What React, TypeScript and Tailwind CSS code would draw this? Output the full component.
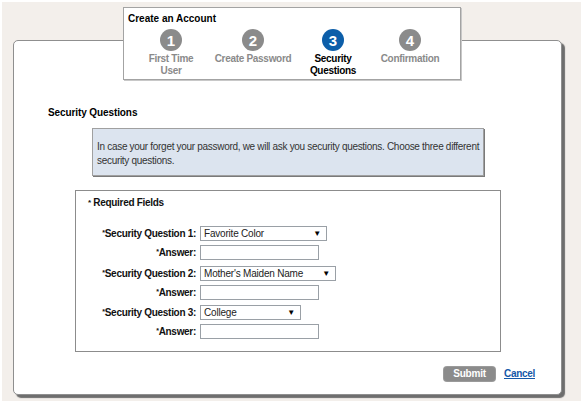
import React from "react";

function Step({ n, label, active, w }: { n: number; label: React.ReactNode; active?: boolean; w: string }) {
  return (
    <div className={`flex flex-col items-center ${w}`}>
      <div
        className={`w-[22px] h-[22px] rounded-full flex items-center justify-center text-white font-bold text-[15px] leading-none ${
          active ? "bg-[#0c5ea9]" : "bg-[#8b8b8b]"
        }`}
      >
        {n}
      </div>
      <div
        className={`mt-[2px] text-center text-[10px] tracking-[-0.3px] leading-[12px] font-bold ${
          active ? "text-black" : "text-[#8a8a8a]"
        }`}
      >
        {label}
      </div>
    </div>
  );
}

function Select({ value, w }: { value: string; w: string }) {
  return (
    <div
      className={`h-[15px] ${w} border border-[#9aa0a6] bg-white flex items-center justify-between pl-[3px] pr-[5px] text-[10px] tracking-[-0.2px] leading-none text-[#222]`}
    >
      <span>{value}</span>
      <span className="text-[8px] text-black">▼</span>
    </div>
  );
}

function Input() {
  return <div className="h-[15px] w-[119px] border border-[#9aa0a6] bg-white" />;
}

function Label({ text }: { text: string }) {
  return (
    <div className="w-[124px] text-right pr-[4px] text-[10px] tracking-[-0.3px] leading-[13px] font-bold text-[#111]">
      <span className="text-[7px] align-top relative top-[-1px]">*</span>
      {text}
    </div>
  );
}

export default function App() {
  return (
    <div className="w-[581px] h-[401px] bg-white pt-[2px] pl-[2px] font-['Liberation_Sans',Arial,sans-serif] overflow-hidden">
      <div className="w-[579px] h-[399px] bg-[#f3efeb] pt-[5px]">
        {/* Stepper */}
        <div className="relative z-10 ml-[121px] w-[338px] h-[73px] bg-white border border-[#a3a3a3] shadow-[1px_1px_0_#c8c8c8] pt-[4px]">
          <div className="pl-[4px] text-[10px] leading-[13px] font-bold text-black">Create an Account</div>
          <div className="mt-[4px] flex pl-[11px]">
            <Step n={1} w="w-[72px]" label={<>First Time<br />User</>} />
            <Step n={2} w="w-[92px]" label="Create Password" />
            <Step n={3} w="w-[68px]" active label={<>Security<br />Questions</>} />
            <Step n={4} w="w-[86px]" label="Confirmation" />
          </div>
        </div>

        {/* Main panel */}
        <div className="-mt-[40px] ml-[11px] w-[549px] h-[355px] bg-white border border-[#8f8f8f] rounded-[5px] shadow-[3px_3px_1px_#6e6e6e] pt-[65px]">
          <div className="pl-[34px] text-[10px] tracking-[-0.1px] leading-[13px] font-bold text-black">Security Questions</div>

          <div className="mt-[9px] ml-[78px] w-[392px] h-[48px] bg-[#dce4ef] border border-[#a0a0a0] shadow-[1px_1px_0_#7a7a7a] pt-[11px] pl-[4px] text-[10px] tracking-[-0.3px] leading-[14px] text-[#333] whitespace-nowrap">
            In case your forget your password, we will ask you security questions. Choose three different
            <br />
            security questions.
          </div>

          <div className="mt-[14px] ml-[61px] w-[426px] h-[162px] border border-[#8c8c8c] pt-[5px]">
            <div className="pl-[12px] text-[10px] tracking-[-0.3px] leading-[13px] font-bold text-[#111]">
              <span className="text-[8px] align-top">*</span> Required Fields
            </div>
            <div className="mt-[17px] flex flex-col">
              <div className="flex items-center mb-[4px]">
                <Label text="Security Question 1:" />
                <Select value="Favorite Color" w="w-[127px]" />
              </div>
              <div className="flex items-center mb-[6px]">
                <Label text="Answer:" />
                <Input />
              </div>
              <div className="flex items-center mb-[4px]">
                <Label text="Security Question 2:" />
                <Select value="Mother's Maiden Name" w="w-[136px]" />
              </div>
              <div className="flex items-center mb-[5px]">
                <Label text="Answer:" />
                <Input />
              </div>
              <div className="flex items-center mb-[4px]">
                <Label text="Security Question 3:" />
                <Select value="College" w="w-[101px]" />
              </div>
              <div className="flex items-center">
                <Label text="Answer:" />
                <Input />
              </div>
            </div>
          </div>

          <div className="mt-[15px] flex items-center justify-end pr-[26px] gap-[9px]">
            <button className="w-[51px] h-[14px] rounded-[3px] bg-[#8b8b8b] text-white text-[10px] tracking-[-0.2px] leading-none font-bold flex items-center justify-center shadow-[0_0_0_1px_#9a9a9a]">
              Submit
            </button>
            <a className="text-[10px] tracking-[-0.3px] leading-none font-bold text-[#1558a8] underline">Cancel</a>
          </div>
        </div>
      </div>
    </div>
  );
}
